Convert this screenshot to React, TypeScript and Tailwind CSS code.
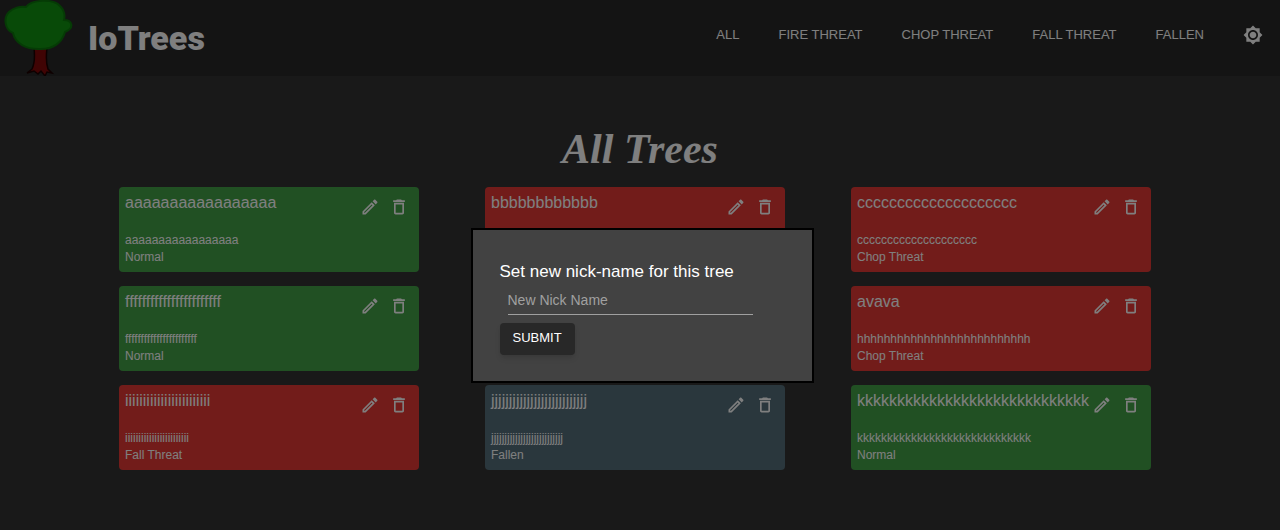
import { MdBrightness7, MdOutlineDelete, MdOutlineEdit } from "react-icons/md";

type Tree = { name: string; id: string; status: string };

const trees: Tree[] = [
  { name: "a".repeat(17), id: "a".repeat(17), status: "Normal" },
  { name: "b".repeat(12), id: "b".repeat(12), status: "Fire Threat" },
  { name: "c".repeat(20), id: "c".repeat(20), status: "Chop Threat" },
  { name: "f".repeat(23), id: "f".repeat(23), status: "Normal" },
  { name: "g".repeat(20), id: "g".repeat(20), status: "Normal" },
  { name: "avava", id: "h".repeat(26), status: "Chop Threat" },
  { name: "i".repeat(24), id: "i".repeat(24), status: "Fall Threat" },
  { name: "j".repeat(27), id: "j".repeat(27), status: "Fallen" },
  { name: "k".repeat(29), id: "k".repeat(29), status: "Normal" },
];

const tones: Record<string, string> = {
  Normal: "bg-[#43a047]",
  Fallen: "bg-[#546e7a]",
};

const links = ["All", "Fire Threat", "Chop Threat", "Fall Threat", "Fallen"];

function TreeLogo() {
  return (
    <svg viewBox="0 0 80 76" className="h-[76px] w-20" aria-hidden="true">
      <path
        d="M34 48 C35 57 34 65 32 69 L27 73 L34 71 L38 74 L41 71 L45 76 L47 72 L52 73 L48 69 C46 63 46 56 47 48Z"
        fill="#800808"
        stroke="#1c0000"
        strokeWidth="1.5"
      />
      <path
        d="M26 7 C31 0 53 -2 60 6 C65 11 65 16 64 20 C72 20 75 28 65 32 C62 43 53 49 41 49 C26 50 15 43 13 33 C5 30 3 18 9 12 C13 8 20 6 26 7Z"
        fill="#109410"
        stroke="#0b760b"
        strokeWidth="2"
      />
    </svg>
  );
}

function TreeCard({ tree }: { tree: Tree }) {
  return (
    <article className={`flex h-[85px] flex-col justify-between rounded px-1.5 py-1.5 ${tones[tree.status] ?? "bg-[#e53935]"}`}>
      <div className="flex items-start justify-between">
        <h2 className="text-base leading-5">{tree.name}</h2>
        <div className="flex gap-[9px] pt-1 pr-1">
          <button type="button" aria-label="Edit" className="size-5">
            <MdOutlineEdit size={20} />
          </button>
          <button type="button" aria-label="Delete" className="size-5">
            <MdOutlineDelete size={20} />
          </button>
        </div>
      </div>
      <div className="text-xs leading-[17px]">
        <p>{tree.id}</p>
        <p>{tree.status}</p>
      </div>
    </article>
  );
}

export default function App() {
  return (
    <div className="min-h-screen bg-[#323232] font-['Liberation_Sans',Arial,sans-serif] text-white">
      <header className="flex h-19 items-center bg-[#282828] pr-[17px]">
        <TreeLogo />
        <a href="#home" className="ml-2 font-[Roboto,sans-serif] text-[34px] leading-none font-black">
          IoTrees
        </a>
        <nav className="ml-auto flex items-center gap-[39px] pb-1.5 text-[13px] uppercase">
          {links.map((label) => (
            <a key={label} href="#trees">{label}</a>
          ))}
          <button type="button" aria-label="Toggle theme">
            <MdBrightness7 size={20} />
          </button>
        </nav>
      </header>
      <main id="trees">
        <h1 className="pt-12 text-center font-['Liberation_Serif',serif] text-[42px] leading-[50px] font-bold italic">All Trees</h1>
        <div className="mt-[13px] grid grid-cols-3 gap-x-[66px] gap-y-3.5 pr-[129px] pl-[119px]">
          {trees.map((tree) => (
            <TreeCard key={tree.name} tree={tree} />
          ))}
        </div>
      </main>
      <div className="fixed inset-0 flex items-start justify-center bg-black/50 pt-[228px] pl-1">
        <form
          role="dialog"
          aria-labelledby="dialog-title"
          onSubmit={(event) => event.preventDefault()}
          className="flex w-[343px] flex-col items-start border-2 border-black bg-[#424242] px-[27px] pt-8 pb-[26px]"
        >
          <h2 id="dialog-title" className="text-[17px] leading-5">Set new nick-name for this tree</h2>
          <input
            aria-label="New Nick Name"
            placeholder="New Nick Name"
            className="mt-[3px] ml-2 h-[30px] w-[245px] border-b border-[#a0a0a0] bg-transparent text-sm outline-none placeholder:text-[#a0a0a0]"
          />
          <button type="submit" className="mt-2 h-8 rounded bg-[#282828] px-[13px] pb-0.5 text-[13px] shadow-md">SUBMIT</button>
        </form>
      </div>
    </div>
  );
}
